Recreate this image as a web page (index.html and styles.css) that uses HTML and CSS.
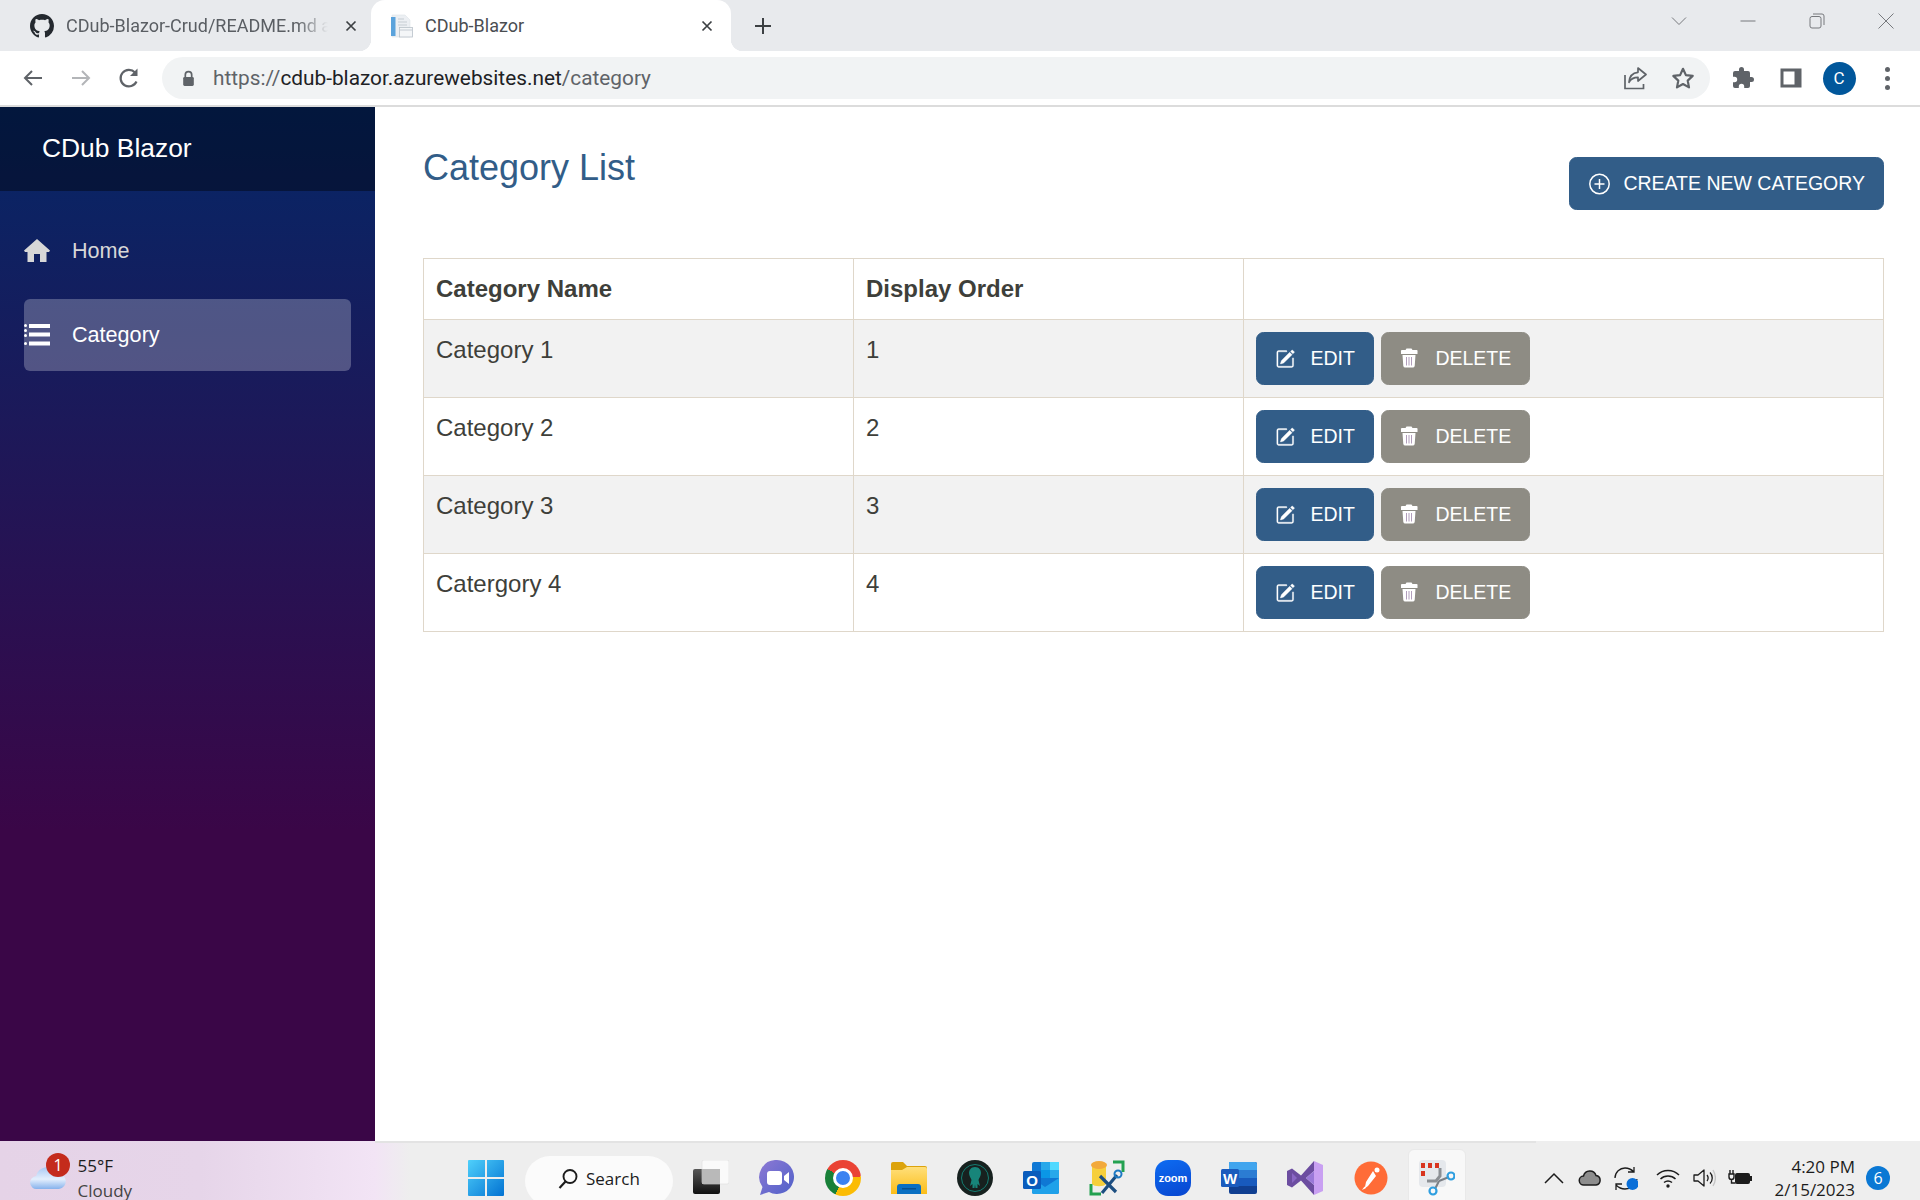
FILE: index.html
```html
<!DOCTYPE html>
<html lang="en">
<head>
<meta charset="utf-8">
<title>CDub-Blazor</title>
<link rel="stylesheet" href="styles.css">
</head>
<body>
<div class="browser">
  <div class="tabstrip">
    <div class="tab">
      <svg class="fav" viewBox="0 0 16 16"><path fill="#24292f" d="M8 0C3.58 0 0 3.58 0 8c0 3.54 2.29 6.53 5.47 7.59.4.07.55-.17.55-.38 0-.19-.01-.82-.01-1.49-2.01.37-2.53-.49-2.69-.94-.09-.23-.48-.94-.82-1.13-.28-.15-.68-.52-.01-.53.63-.01 1.08.58 1.23.82.72 1.21 1.87.87 2.33.66.07-.52.28-.87.51-1.07-1.78-.2-3.64-.89-3.64-3.95 0-.87.31-1.59.82-2.15-.08-.2-.36-1.02.08-2.12 0 0 .67-.21 2.2.82.64-.18 1.32-.27 2-.27.68 0 1.36.09 2 .27 1.53-1.04 2.2-.82 2.2-.82.44 1.1.16 1.92.08 2.12.51.56.82 1.27.82 2.15 0 3.07-1.87 3.75-3.65 3.95.29.25.54.73.54 1.48 0 1.07-.01 1.93-.01 2.2 0 .21.15.46.55.38A8.013 8.013 0 0016 8c0-4.42-3.58-8-8-8z"/></svg>
      <span class="tab-title tab-title--fade">CDub-Blazor-Crud/README.md at master</span>
      <svg class="tab-close" viewBox="0 0 12 12"><path d="M1.5 1.5l9 9M10.5 1.5l-9 9" stroke="#3c4043" stroke-width="1.7" fill="none"/></svg>
    </div>
    <div class="tab tab--active">
      <svg class="fav fav--doc" viewBox="0 0 24 24"><path d="M3 1h13l5 5v17H3z" fill="#eceff3" stroke="#dde2e7" stroke-width=".6"/><rect x="2" y="3" width="4.500" height="19" fill="#5ba3dc"/><path d="M9 5h6M9 8h9M9 11h9" stroke="#c6cdd4" stroke-width="1.200"/><rect x="10.500" y="13.500" width="13" height="9.500" fill="#f4f6f8" stroke="#b9c1c9" stroke-width=".8"/><path d="M11 16h12" stroke="#b9c1c9" stroke-width=".8"/></svg>
      <span class="tab-title tab-title--grow">CDub-Blazor</span>
      <svg class="tab-close" viewBox="0 0 12 12"><path d="M1.5 1.5l9 9M10.5 1.5l-9 9" stroke="#3c4043" stroke-width="1.7" fill="none"/></svg>
    </div>
    <svg class="newtab" viewBox="0 0 18 18"><path d="M9 1v16M1 9h16" stroke="#3c4043" stroke-width="2" fill="none"/></svg>
    <div class="winctl">
      <span class="winbtn"><svg viewBox="0 0 16 10" class="winicon"><path d="M1 1.5l7 7 7-7" fill="none" stroke="#77797d" stroke-width="1"/></svg></span>
      <span class="winbtn"><svg viewBox="0 0 16 10" class="winicon"><path d="M0.5 5h15" fill="none" stroke="#77797d" stroke-width="1"/></svg></span>
      <span class="winbtn"><svg viewBox="0 0 16 16" class="winicon winicon--sq"><rect x="1" y="3.5" width="11" height="11.5" rx="2" fill="none" stroke="#77797d"/><path d="M4 1h9a2 2 0 0 1 2 2v9" fill="none" stroke="#77797d"/></svg></span>
      <span class="winbtn"><svg viewBox="0 0 16 16" class="winicon winicon--sq"><path d="M.5.5l15 15M15.500.5l-15 15" fill="none" stroke="#77797d"/></svg></span>
    </div>
  </div>
  <div class="toolbar">
    <span class="tbtn"><svg class="ticon" viewBox="0 0 24 24"><path d="M21 12H4M11 5l-7 7 7 7" fill="none" stroke="#5f6368" stroke-width="2"/></svg></span>
    <span class="tbtn"><svg class="ticon" viewBox="0 0 24 24"><path d="M3 12h17M13 5l7 7-7 7" fill="none" stroke="#b3b5b8" stroke-width="2"/></svg></span>
    <span class="tbtn"><svg class="ticon" viewBox="0 0 24 24"><path d="M19.500 15.500A8.300 8.300 0 1 1 18 6.500" fill="none" stroke="#5f6368" stroke-width="2.200"/><path d="M20.500 2.500v7.500H13z" fill="#5f6368"/></svg></span>
    <div class="omnibox">
      <svg class="lock" viewBox="0 0 12 16"><path d="M3 7V4.500a3 3 0 0 1 6 0V7" fill="none" stroke="#5f6368" stroke-width="1.600"/><rect x="1" y="6.500" width="10" height="8.500" rx="1.300" fill="#5f6368"/></svg>
      <span class="url"><span class="url-dim">https://</span>cdub-blazor.azurewebsites.net<span class="url-dim">/category</span></span>
      <span class="tbtn"><svg class="ticon" viewBox="0 0 24 24"><path d="M2 9v13.500h18.500V18" fill="none" stroke="#5f6368" stroke-width="1.700"/><path d="M15 2l8 6.500-8 6.500v-3.700c-4 0-7 1-9 5 .4-6 3.500-9.500 9-10z" fill="none" stroke="#5f6368" stroke-width="1.700" stroke-linejoin="round"/></svg></span>
      <span class="tbtn"><svg class="ticon" viewBox="0 0 24 24"><path d="M12 2.800l2.900 6.300 6.800.8-5 4.700 1.300 6.800-6-3.400-6 3.400 1.300-6.800-5-4.700 6.800-.8z" fill="none" stroke="#5f6368" stroke-width="2.200" stroke-linejoin="round"/></svg></span>
    </div>
    <div class="tactions">
      <span class="tbtn"><svg class="ticon" viewBox="0 0 24 24"><path fill="#5f6368" d="M20.500 11H19V7a2 2 0 0 0-2-2h-4V3.500a2.500 2.500 0 0 0-5 0V5H4a2 2 0 0 0-2 2v3.800h1.500a2.700 2.700 0 0 1 0 5.400H2V20a2 2 0 0 0 2 2h3.800v-1.500a2.700 2.700 0 0 1 5.400 0V22H17a2 2 0 0 0 2-2v-4h1.500a2.500 2.500 0 0 0 0-5z"/></svg></span>
      <span class="tbtn"><svg class="ticon" viewBox="0 0 24 24"><rect x="1.500" y="2.500" width="21" height="19" fill="#5f6368"/><rect x="4.500" y="5.500" width="11" height="13" fill="#fff"/></svg></span>
      <span class="tbtn"><span class="avatar">C</span></span>
      <span class="tbtn"><span class="dots"><i></i><i></i><i></i></span></span>
    </div>
  </div>
</div>

<div class="app">
  <aside class="sidebar">
    <div class="brand">CDub Blazor</div>
    <nav class="nav">
      <a class="nav-item">
        <svg class="nav-icon" viewBox="0 0 26 24"><path fill="#d7d7d7" d="M13 0L0 11.500l1 1.500h2.500v10H10v-8h6v8h6.500V13H25l1-1.500z"/></svg>
        <span>Home</span>
      </a>
      <a class="nav-item nav-item--active">
        <svg class="nav-icon" viewBox="0 0 26 24"><g fill="#fff"><rect x="5" y="1" width="21" height="4"/><rect x="5" y="9.500" width="21" height="4"/><rect x="5" y="18.500" width="21" height="4"/><rect x="0" y="1" width="3" height="3" rx="1.500"/><rect x="0" y="6" width="3" height="3" rx="1.500"/><rect x="0" y="11" width="3" height="3" rx="1.500"/><rect x="0" y="19" width="3" height="3" rx="1.500"/></g></svg>
        <span>Category</span>
      </a>
    </nav>
  </aside>
  <main class="content">
    <div class="page-head">
      <h1 class="page-title">Category List</h1>
      <button class="btn btn--primary btn--create">
        <svg class="btn-icon" viewBox="0 0 24 24"><circle cx="11.500" cy="12" r="9.700" fill="none" stroke="#fff" stroke-width="1.500"/><path d="M11.500 7v10M6.500 12h10" stroke="#fff" stroke-width="1.500"/></svg>
        Create New Category
      </button>
    </div>
    <table class="grid">
      <colgroup><col class="col-name"><col class="col-order"><col></colgroup>
      <thead><tr><th>Category Name</th><th>Display Order</th><th></th></tr></thead>
      <tbody>
        <tr class="striped"><td>Category 1</td><td>1</td><td><div class="actions">
          <button class="btn btn--primary"><svg class="btn-icon" viewBox="-.5 -2 20 20"><path fill="#fff" stroke="#fff" stroke-width=".3" d="M15.502 1.940a.5.5 0 0 1 0 .706L14.459 3.690l-2-2L13.502.646a.5.5 0 0 1 .707 0l1.293 1.293zm-1.750 2.456-2-2L4.939 9.210a.5.5 0 0 0-.121.196l-.805 2.414a.25.25 0 0 0 .316.316l2.414-.805a.5.5 0 0 0 .196-.12l6.813-6.814zM1 13.500A1.500 1.500 0 0 0 2.500 15h11a1.500 1.500 0 0 0 1.500-1.500v-6a.5.5 0 0 0-1 0v6a.5.5 0 0 1-.5.5h-11a.5.5 0 0 1-.5-.5v-11a.5.5 0 0 1 .5-.5H9a.5.5 0 0 0 0-1H2.500A1.500 1.500 0 0 0 1 2.500v11z"/></svg>Edit</button>
          <button class="btn btn--secondary"><svg class="btn-icon" viewBox="0 0 24 24"><path fill="#fff" d="M6.500 1.500h5l1 1.500h4a1 1 0 0 1 1 1.500v2.500H1V4.500A1 1 0 0 1 2 3h3.500zM2.500 8h13l-.8 11a2 2 0 0 1-2 1.500H5.300a2 2 0 0 1-2-1.500z"/><path d="M6.500 10v8.500M9 10v8.500M11.500 10v8.500" stroke="#a993b4" stroke-width=".9"/></svg>Delete</button>
        </div></td></tr>
        <tr><td>Category 2</td><td>2</td><td><div class="actions">
          <button class="btn btn--primary"><svg class="btn-icon" viewBox="-.5 -2 20 20"><path fill="#fff" stroke="#fff" stroke-width=".3" d="M15.502 1.940a.5.5 0 0 1 0 .706L14.459 3.690l-2-2L13.502.646a.5.5 0 0 1 .707 0l1.293 1.293zm-1.750 2.456-2-2L4.939 9.210a.5.5 0 0 0-.121.196l-.805 2.414a.25.25 0 0 0 .316.316l2.414-.805a.5.5 0 0 0 .196-.12l6.813-6.814zM1 13.500A1.500 1.500 0 0 0 2.500 15h11a1.500 1.500 0 0 0 1.500-1.500v-6a.5.5 0 0 0-1 0v6a.5.5 0 0 1-.5.5h-11a.5.5 0 0 1-.5-.5v-11a.5.5 0 0 1 .5-.5H9a.5.5 0 0 0 0-1H2.500A1.500 1.500 0 0 0 1 2.500v11z"/></svg>Edit</button>
          <button class="btn btn--secondary"><svg class="btn-icon" viewBox="0 0 24 24"><path fill="#fff" d="M6.500 1.500h5l1 1.500h4a1 1 0 0 1 1 1.500v2.500H1V4.500A1 1 0 0 1 2 3h3.500zM2.500 8h13l-.8 11a2 2 0 0 1-2 1.500H5.300a2 2 0 0 1-2-1.500z"/><path d="M6.500 10v8.500M9 10v8.500M11.500 10v8.500" stroke="#a993b4" stroke-width=".9"/></svg>Delete</button>
        </div></td></tr>
        <tr class="striped"><td>Category 3</td><td>3</td><td><div class="actions">
          <button class="btn btn--primary"><svg class="btn-icon" viewBox="-.5 -2 20 20"><path fill="#fff" stroke="#fff" stroke-width=".3" d="M15.502 1.940a.5.5 0 0 1 0 .706L14.459 3.690l-2-2L13.502.646a.5.5 0 0 1 .707 0l1.293 1.293zm-1.750 2.456-2-2L4.939 9.210a.5.5 0 0 0-.121.196l-.805 2.414a.25.25 0 0 0 .316.316l2.414-.805a.5.5 0 0 0 .196-.12l6.813-6.814zM1 13.500A1.500 1.500 0 0 0 2.500 15h11a1.500 1.500 0 0 0 1.500-1.500v-6a.5.5 0 0 0-1 0v6a.5.5 0 0 1-.5.5h-11a.5.5 0 0 1-.5-.5v-11a.5.5 0 0 1 .5-.5H9a.5.5 0 0 0 0-1H2.500A1.500 1.500 0 0 0 1 2.500v11z"/></svg>Edit</button>
          <button class="btn btn--secondary"><svg class="btn-icon" viewBox="0 0 24 24"><path fill="#fff" d="M6.500 1.500h5l1 1.500h4a1 1 0 0 1 1 1.500v2.500H1V4.500A1 1 0 0 1 2 3h3.500zM2.500 8h13l-.8 11a2 2 0 0 1-2 1.500H5.300a2 2 0 0 1-2-1.500z"/><path d="M6.500 10v8.500M9 10v8.500M11.500 10v8.500" stroke="#a993b4" stroke-width=".9"/></svg>Delete</button>
        </div></td></tr>
        <tr><td>Catergory 4</td><td>4</td><td><div class="actions">
          <button class="btn btn--primary"><svg class="btn-icon" viewBox="-.5 -2 20 20"><path fill="#fff" stroke="#fff" stroke-width=".3" d="M15.502 1.940a.5.5 0 0 1 0 .706L14.459 3.690l-2-2L13.502.646a.5.5 0 0 1 .707 0l1.293 1.293zm-1.750 2.456-2-2L4.939 9.210a.5.5 0 0 0-.121.196l-.805 2.414a.25.25 0 0 0 .316.316l2.414-.805a.5.5 0 0 0 .196-.12l6.813-6.814zM1 13.500A1.500 1.500 0 0 0 2.500 15h11a1.500 1.500 0 0 0 1.500-1.500v-6a.5.5 0 0 0-1 0v6a.5.5 0 0 1-.5.5h-11a.5.5 0 0 1-.5-.5v-11a.5.5 0 0 1 .5-.5H9a.5.5 0 0 0 0-1H2.500A1.500 1.500 0 0 0 1 2.500v11z"/></svg>Edit</button>
          <button class="btn btn--secondary"><svg class="btn-icon" viewBox="0 0 24 24"><path fill="#fff" d="M6.500 1.500h5l1 1.500h4a1 1 0 0 1 1 1.500v2.500H1V4.500A1 1 0 0 1 2 3h3.500zM2.500 8h13l-.8 11a2 2 0 0 1-2 1.500H5.300a2 2 0 0 1-2-1.500z"/><path d="M6.500 10v8.500M9 10v8.500M11.500 10v8.500" stroke="#a993b4" stroke-width=".9"/></svg>Delete</button>
        </div></td></tr>
      </tbody>
    </table>
  </main>
</div>

<footer class="taskbar">
  <div class="weather">
    <div class="weather-icon">
      <svg viewBox="0 0 36 24" class="cloud"><defs><linearGradient id="cl" x1="0" y1="0" x2="0" y2="1"><stop offset="0" stop-color="#a9c9f3"/><stop offset=".55" stop-color="#e4effd"/><stop offset="1" stop-color="#86b2ec"/></linearGradient></defs><path fill="url(#cl)" d="M7 24a6.500 6.500 0 0 1-.8-13A11 11 0 0 1 27 8.500 7.800 7.800 0 0 1 29 24z"/></svg>
      <span class="wbadge">1</span>
    </div>
    <div class="weather-text"><span class="w-temp">55°F</span><span class="w-desc">Cloudy</span></div>
  </div>
  <svg class="winlogo" viewBox="0 0 36 36"><defs><linearGradient id="wl" x1="0" y1="0" x2="1" y2="1"><stop offset="0" stop-color="#4fd0fb"/><stop offset="1" stop-color="#0272d2"/></linearGradient></defs><path fill="url(#wl)" d="M1 0h16v17H0V1a1 1 0 0 1 1-1zM19 0h16a1 1 0 0 1 1 1v16H19zM0 19h17v17H1a1 1 0 0 1-1-1zM19 19h17v16a1 1 0 0 1-1 1H19z"/></svg>
  <div class="search">
    <svg class="search-icon" viewBox="0 0 22 22"><circle cx="13" cy="8.500" r="6.500" fill="none" stroke="#1c1c1c" stroke-width="1.900"/><path d="M8.500 13.500L2.500 20" stroke="#1c1c1c" stroke-width="2.200"/></svg>
    <span>Search</span>
  </div>
  <div class="apps">
    <span class="app-slot"><svg class="appicon" viewBox="0 0 36 36"><defs><linearGradient id="tv" x1="0" y1="0" x2="0" y2="1"><stop offset="0" stop-color="#585858"/><stop offset="1" stop-color="#111"/></linearGradient></defs><rect x="0" y="9" width="27" height="25" rx="2" fill="url(#tv)"/><rect x="9" y="0" width="27" height="24" rx="2" fill="#fafafa" stroke="#dedede" stroke-width=".6"/><rect x="9" y="9" width="18" height="15" fill="#b9b9b9"/></svg></span>
    <span class="app-slot"><svg class="appicon" viewBox="0 0 36 36"><defs><linearGradient id="mt" x1="0" y1="0" x2="1" y2="1"><stop offset="0" stop-color="#8d79d4"/><stop offset="1" stop-color="#4f60c9"/></linearGradient></defs><path fill="url(#mt)" d="M18 0a17 17 0 1 1-8 32L1 35l2.500-8A17 17 0 0 1 18 0z"/><rect x="8" y="11" width="15" height="14" rx="3" fill="#fff"/><path d="M25 16l5-4v12l-5-4z" fill="#fff"/></svg></span>
    <span class="app-slot"><span class="chrome-logo"><span class="chrome-core"></span></span></span>
    <span class="app-slot"><svg class="appicon" viewBox="0 0 36 32"><defs><linearGradient id="fd" x1="0" y1="0" x2="0" y2="1"><stop offset="0" stop-color="#ffdf7a"/><stop offset="1" stop-color="#fbbd18"/></linearGradient></defs><path fill="#dca30c" d="M0 2a2 2 0 0 1 2-2h10l4 4h18a2 2 0 0 1 2 2v6H0z"/><path fill="url(#fd)" d="M0 8h11l5-3h18a2 2 0 0 1 2 2v25H0z"/><path fill="#0a6fc2" d="M6 25a3 3 0 0 1 3-3h18a3 3 0 0 1 3 3v7H6z"/><rect x="11" y="26" width="14" height="1.500" fill="#07508f"/></svg></span>
    <span class="app-slot"><svg class="appicon" viewBox="0 0 36 36"><circle cx="18" cy="18" r="18" fill="#17211f"/><circle cx="18" cy="18" r="13.500" fill="none" stroke="#137d72" stroke-width="1"/><path fill="#17857a" d="M18 7c4 0 6 3 6 6 0 3-2 5-2.500 7l1.500 6-2.500-2v4h-2l-.500-3.500-.500 3.500h-2v-4L13 26l1.500-6C14 18 12 16 12 13c0-3 2-6 6-6z"/></svg></span>
    <span class="app-slot"><svg class="appicon" viewBox="0 0 36 32"><rect x="9" y="0" width="27" height="32" rx="2" fill="#0f78d4"/><rect x="18" y="0" width="9" height="8" fill="#28a8ea"/><rect x="27" y="0" width="9" height="8" fill="#50d9ff"/><rect x="18" y="8" width="9" height="8" fill="#0a97e6"/><rect x="27" y="8" width="9" height="8" fill="#28a8ea"/><path d="M9 16l13 9 14-9v14a2 2 0 0 1-2 2H11a2 2 0 0 1-2-2z" fill="#1fa1e9"/><rect x="0" y="9" width="18" height="18" rx="1.500" fill="#0a5cbc"/><text x="9" y="23.500" class="tile-letter">O</text></svg></span>
    <span class="app-slot"><svg class="appicon" viewBox="0 0 36 36"><path d="M3 6c0-3 14-3 14 0v18c-2 3-12 3-14 0z" fill="#f6cf3c"/><ellipse cx="10" cy="5" rx="8" ry="4" fill="#f2a93b"/><path d="M24 2h10v10" fill="none" stroke="#23a150" stroke-width="3"/><path d="M2 24v10h10" fill="none" stroke="#23a150" stroke-width="3"/><path d="M11 16l16 16M28 15L13 33" stroke="#1c4e80" stroke-width="3.200"/><circle cx="29" cy="14" r="3.500" fill="none" stroke="#1e7ac4" stroke-width="2"/></svg></span>
    <span class="app-slot"><span class="zoom-tile">zoom</span></span>
    <span class="app-slot"><svg class="appicon" viewBox="0 0 36 32"><rect x="8" y="0" width="28" height="32" rx="2" fill="#103f91"/><path d="M8 0h26a2 2 0 0 1 2 2v6H8z" fill="#41a5ee"/><rect x="8" y="8" width="28" height="8" fill="#2b7cd3"/><rect x="8" y="16" width="28" height="8" fill="#185abd"/><rect x="0" y="7" width="18" height="18" rx="1.500" fill="#1a5bbd"/><text x="9" y="21.500" class="tile-letter">W</text></svg></span>
    <span class="app-slot"><svg class="appicon" viewBox="0 0 36 36"><path fill="#6c4da0" d="M0 11l5-2.500 9 7L27 1v10l-8 7 8 7v10L14 20.500 5 27.500 0 25z"/><path fill="#c9a0f2" d="M27 1l9 4v26l-9 4z"/><path fill="#8a66c4" d="M5 13v10l5-5z"/><path fill="#9a78d8" d="M27 11v14l-8-7z"/></svg></span>
    <span class="app-slot"><svg class="appicon" viewBox="0 0 36 36"><circle cx="18" cy="18" r="16.500" fill="#ff6c37"/><circle cx="24" cy="10" r="2.500" fill="#fff"/><path d="M20 11l3 5-8 10-4 3 1-2 1-5z" fill="#fff"/><path d="M9 30l4-2-1.500-1.500z" fill="#fff"/></svg></span>
    <span class="app-slot app-slot--active"><svg class="appicon" viewBox="0 0 36 36"><rect x="0" y="0" width="27" height="27" rx="4" fill="#e5e8ec"/><rect x="2" y="3" width="4" height="5" fill="#d8341f"/><rect x="9" y="3" width="4" height="5" fill="#d8341f"/><rect x="16" y="3" width="4" height="5" fill="#d8341f"/><rect x="2" y="11" width="4" height="5" fill="#d8341f"/><path d="M8 21h9l4-5V8" fill="none" stroke="#8b8f94" stroke-width="3"/><path d="M20 21l-4 8M20 21l10-4" stroke="#7a7f85" stroke-width="2"/><circle cx="14" cy="31" r="3.500" fill="none" stroke="#2f9fe0" stroke-width="2.200"/><circle cx="32" cy="16" r="3.500" fill="none" stroke="#2f9fe0" stroke-width="2.200"/></svg></span>
  </div>
  <div class="tray">
    <span class="tray-slot"><svg class="tray-icon" viewBox="0 0 24 24"><path d="M3 17l9-9 9 9" fill="none" stroke="#1c1c1c" stroke-width="1.500"/></svg></span>
    <span class="tray-slot"><svg class="tray-icon" viewBox="0 0 24 24"><path d="M6 19a4.500 4.500 0 0 1-.5-9A6.500 6.500 0 0 1 18 9.500a4.800 4.800 0 0 1 0 9.500z" fill="#8d8d8d" stroke="#1c1c1c" stroke-width="1.500"/></svg></span>
    <span class="tray-slot"><svg class="tray-icon" viewBox="0 0 24 24"><path d="M1 12C1 6 6 2 11 2c4 0 6 1 9 4M20 1v5h-6" fill="none" stroke="#1c1c1c" stroke-width="1.300"/><path d="M23 13c-1 6-6 10-12 10-4 0-7-2-9-4M2 24v-6h6" fill="none" stroke="#1c1c1c" stroke-width="1.300"/><circle cx="18.500" cy="18" r="6" fill="#0a6fd8"/></svg></span>
    <span class="tray-slot tray-slot--wifi"><svg class="tray-icon" viewBox="0 0 24 24"><path d="M1 9c6-6 16-6 22 0M4.500 13c4-4 11-4 15 0M8 16.500c2.500-2 5.500-2 8 0" fill="none" stroke="#1c1c1c" stroke-width="1.500"/><circle cx="12" cy="20" r="1.700" fill="#1c1c1c"/></svg></span>
    <span class="tray-slot"><svg class="tray-icon" viewBox="0 0 24 24"><path d="M2 9h4l6-5v16l-6-5H2z" fill="none" stroke="#1c1c1c" stroke-width="1.300" stroke-linejoin="round"/><path d="M15 9c1.500 2 1.500 4 0 6M18 6.500c3 3 3 8 0 11" fill="none" stroke="#1c1c1c" stroke-width="1.300"/><path d="M21 4c3 5 3 11 0 16" fill="none" stroke="#c4c4c4" stroke-width="1.300"/></svg></span>
    <span class="tray-slot"><svg class="tray-icon" viewBox="0 0 24 24"><path d="M2 4v4M5 4v4M1 8h5v3a2.500 2.500 0 0 1-5 0zM3.500 13v4h4" fill="none" stroke="#1c1c1c" stroke-width="1.400"/><rect x="7" y="7" width="15" height="11" rx="2" fill="#1c1c1c"/><rect x="22" y="10" width="2" height="5" fill="#1c1c1c"/></svg></span>
    <div class="clock"><span>4:20 PM</span><span>2/15/2023</span></div>
    <span class="notif">6</span>
  </div>
</footer>
</body>
</html>
```
FILE: styles.css
```css
* { box-sizing: border-box; }
html, body { margin: 0; height: 100%; }
body {
  width: 1920px;
  height: 1200px;
  overflow: hidden;
  display: flex;
  flex-direction: column;
  font-family: "Liberation Sans", Arial, sans-serif;
  background: #fff;
  color: #3e3f3a;
}

/* Browser chrome */
.browser { flex: none; background: #fff; border-bottom: 2px solid #dcdcdc; }
.tabstrip { display: flex; height: 51px; background: #e8eaed; align-items: center; }
.tab {
  position: relative;
  width: 371px;
  height: 51px;
  flex: none;
  display: flex;
  align-items: center;
  padding: 0 14px 0 30px;
  font-family: Roboto, "Open Sans", sans-serif;
  font-size: 18px;
  color: #5a5e63;
}
.tab--active {
  width: 360px;
  padding-left: 18px;
  padding-right: 18px;
  background: #fff;
  border-radius: 14px 14px 0 0;
  color: #4a4d51;
}
.tab--active::before, .tab--active::after {
  content: "";
  position: absolute;
  bottom: 0;
  width: 12px;
  height: 12px;
}
.tab--active::before { left: -12px; background: radial-gradient(circle at 0 0, transparent 12px, #fff 12.500px); }
.tab--active::after { right: -12px; background: radial-gradient(circle at 100% 0, transparent 12px, #fff 12.500px); }
.fav { width: 24px; height: 24px; flex: none; }
.fav--doc { margin-right: 12px; }
.tab-title { margin-left: 12px; white-space: nowrap; overflow: hidden; }
.tab-title--fade {
  width: 262px;
  -webkit-mask-image: linear-gradient(90deg, #000 88%, transparent 100%);
  mask-image: linear-gradient(90deg, #000 88%, transparent 100%);
}
.tab-title--grow { flex: 1; margin-left: 0; }
.tab-close { width: 12px; height: 12px; flex: none; margin-left: auto; }
.newtab { width: 18px; height: 18px; flex: none; margin: 0 0 0 23px; }
.winctl { margin-left: auto; display: flex; align-self: flex-start; }
.winbtn { width: 69px; height: 42px; display: flex; align-items: center; justify-content: center; }
.winicon { width: 16px; height: 10px; }
.winicon--sq { height: 16px; }

.toolbar { display: flex; align-items: center; height: 54px; padding-left: 9px; }
.tbtn { width: 48px; height: 42px; flex: none; display: flex; align-items: center; justify-content: center; }
.ticon { width: 24px; height: 24px; }
.omnibox {
  width: 1548px;
  height: 42px;
  margin-left: 9px;
  padding: 0 3px 0 20px;
  border-radius: 21px;
  background: #f1f3f4;
  display: flex;
  align-items: center;
  flex: none;
}
.lock { width: 13px; height: 17px; flex: none; }
.url {
  flex: 1;
  margin-left: 18px;
  font-family: Roboto, "Open Sans", sans-serif;
  font-size: 20.800px;
  color: #202124;
  white-space: nowrap;
}
.url-dim { color: #5f6368; }
.tactions { display: flex; margin-left: 9px; }
.avatar {
  width: 33px;
  height: 33px;
  border-radius: 50%;
  background: #01579b;
  color: #fff;
  font-family: Roboto, sans-serif;
  font-size: 17px;
  display: flex;
  align-items: center;
  justify-content: center;
}
.dots { display: flex; flex-direction: column; gap: 4px; }
.dots i { width: 5px; height: 5px; border-radius: 50%; background: #5f6368; display: block; }

/* App */
.app { flex: 1; min-height: 0; display: flex; }
.sidebar {
  width: 375px;
  flex: none;
  background: linear-gradient(180deg, rgb(5, 39, 103) 0%, #3a0647 70%);
}
.brand {
  height: 84px;
  padding: 0 0 2px 42px;
  display: flex;
  align-items: center;
  background: rgba(0, 0, 0, .4);
  color: #fff;
  font-size: 26.400px;
}
.nav { padding: 24px 24px 0; display: flex; flex-direction: column; gap: 12px; }
.nav-item {
  height: 72px;
  display: flex;
  align-items: center;
  gap: 22px;
  border-radius: 6px;
  color: #d7d7d7;
  font-size: 21.600px;
}
.nav-item--active { background: rgba(255, 255, 255, .25); color: #fff; }
.nav-icon { width: 26px; height: 24px; flex: none; }

.content { flex: 1; min-width: 0; padding: 39px 36px 0 48px; }
.page-head { display: flex; justify-content: space-between; align-items: flex-start; height: 112px; }
.page-title { margin: 0; font-size: 36px; font-weight: 400; line-height: 43px; color: #325d88; }
.btn {
  height: 53px;
  padding: 0 18px;
  display: inline-flex;
  align-items: center;
  gap: 11.500px;
  border: 1px solid transparent;
  border-radius: 7.500px;
  color: #fff;
  font-family: "Liberation Sans", Arial, sans-serif;
  font-size: 19.500px;
  text-transform: uppercase;
  white-space: nowrap;
}
.btn--primary { background: #325d88; border-color: #325d88; }
.btn--secondary { background: #8e8c84; border-color: #8e8c84; }
.btn--create { margin-top: 11px; }
.btn-icon { width: 24px; height: 24px; flex: none; }

.grid { width: 1461px; table-layout: fixed; border-collapse: collapse; font-size: 24px; line-height: 36px; }
.col-name { width: 430px; }
.col-order { width: 390px; }
.grid th, .grid td { border: 1px solid #dfd7ca; padding: 12px; text-align: left; vertical-align: top; }
.grid th { font-weight: 700; }
.striped td { background: #f2f2f2; }
.actions { display: flex; gap: 7px; }

/* Taskbar */
.taskbar {
  position: relative;
  flex: none;
  height: 59px;
  padding: 15px 30px 0 0;
  display: flex;
  align-items: flex-start;
  overflow: hidden;
  background: linear-gradient(90deg, #e5d3e7 0%, #e6d5e9 200px, #f2e4f5 375px, #eeeeee 410px);
  font-family: "Open Sans", "Noto Sans", sans-serif;
  color: #1c1c1c;
}
.taskbar::before {
  content: "";
  position: absolute;
  top: 0;
  left: 375px;
  width: 1161px;
  height: 2px;
  background: #e3e3e3;
}
.weather { width: 468px; flex: none; display: flex; padding-left: 30px; gap: 11.500px; }
.weather-icon { position: relative; width: 36px; height: 44px; flex: none; }
.cloud { position: absolute; left: 0; top: 9px; width: 36px; height: 24px; }
.wbadge {
  position: absolute;
  left: 16px;
  top: -3px;
  width: 24px;
  height: 24px;
  border-radius: 50%;
  background: #c42b1c;
  color: #fff;
  font-size: 16px;
  display: flex;
  align-items: center;
  justify-content: center;
}
.weather-text { display: flex; flex-direction: column; margin-top: -3px; font-size: 17px; line-height: 25px; }
.w-desc { color: #444; }
.winlogo { width: 36px; height: 36px; flex: none; margin-top: 4px; }
.search {
  width: 148px;
  height: 50px;
  margin-left: 21px;
  flex: none;
  border-radius: 25px;
  background: #fbfbfb;
  display: flex;
  align-items: flex-start;
  padding: 12px 0 0 32px;
  gap: 7px;
  font-size: 17px;
  line-height: 22px;
}
.search-icon { width: 22px; height: 22px; flex: none; }
.apps { display: flex; margin-left: 5px; flex: none; }
.app-slot {
  position: relative;
  width: 66px;
  height: 44px;
  display: flex;
  align-items: center;
  justify-content: center;
  flex: none;
}
.app-slot--active::before {
  content: "";
  position: absolute;
  left: 4px;
  right: 4px;
  top: -7px;
  height: 60px;
  background: #f8f8f8;
  border: 1px solid #e9e9e9;
  border-radius: 6px;
}
.appicon { position: relative; width: 36px; height: 36px; }
.chrome-logo {
  width: 36px;
  height: 36px;
  border-radius: 50%;
  background: conic-gradient(#ea4335 0deg 85deg, #fbbc04 85deg 205deg, #188038 205deg 300deg, #ea4335 300deg);
  display: flex;
  align-items: center;
  justify-content: center;
}
.chrome-core { width: 14px; height: 14px; border-radius: 50%; background: #3b82f1; border: 3px solid #fff; box-sizing: content-box; }
.zoom-tile {
  width: 36px;
  height: 36px;
  border-radius: 13px;
  background: linear-gradient(160deg, #0d6cf2, #0845cf);
  color: #fff;
  font-family: "Liberation Sans", sans-serif;
  font-size: 11px;
  font-weight: 700;
  display: flex;
  align-items: center;
  justify-content: center;
}
.tile-letter {
  font-family: "Liberation Sans", sans-serif;
  font-size: 15px;
  font-weight: 700;
  fill: #fff;
  text-anchor: middle;
}
.tray { margin-left: auto; display: flex; align-items: center; height: 44px; flex: none; }
.tray-slot { width: 36px; height: 36px; display: flex; align-items: center; justify-content: center; flex: none; }
.tray-slot--wifi { margin-left: 6px; }
.tray-icon { width: 24px; height: 24px; }
.clock {
  width: 97px;
  display: flex;
  flex-direction: column;
  align-items: flex-end;
  font-size: 17px;
  line-height: 23px;
  white-space: nowrap;
}
.notif {
  width: 24px;
  height: 24px;
  margin-left: 11px;
  border-radius: 50%;
  background: #0a78d4;
  color: #fff;
  font-size: 16px;
  display: flex;
  align-items: center;
  justify-content: center;
  flex: none;
}
```
